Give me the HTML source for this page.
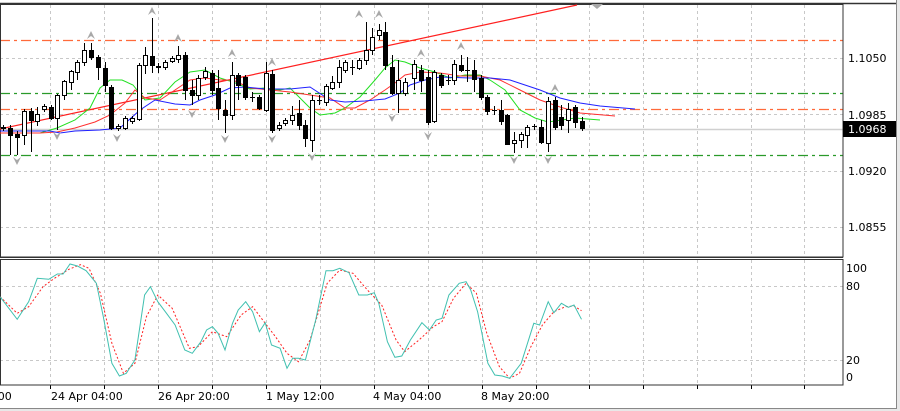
<!DOCTYPE html>
<html><head><meta charset="utf-8"><style>
html,body{margin:0;padding:0;background:#fff;width:900px;height:411px;overflow:hidden}
svg{display:block}
text{font-family:"DejaVu Sans","Liberation Sans",sans-serif;font-size:11px;fill:#000}
</style></head><body>
<svg id="s" width="900" height="411" xmlns="http://www.w3.org/2000/svg">
<rect x="0" y="0" width="900" height="411" fill="#fff"/>
<rect x="897" y="0" width="3" height="411" fill="#e8e8e8"/>
<rect x="0" y="409" width="900" height="2" fill="#e8e8e8"/>
<line x1="0" y1="3.5" x2="897" y2="3.5" stroke="#333" stroke-width="1.5"/>
<line x1="896.5" y1="0" x2="896.5" y2="409" stroke="#888"/>
<line x1="0" y1="408.5" x2="897" y2="408.5" stroke="#888"/>
<g id="g"></g>
<text x="848" y="62">1.1050</text>
<text x="848" y="119">1.0985</text>
<text x="848" y="175">1.0920</text>
<text x="848" y="231">1.0855</text>
<rect x="843" y="121" width="53" height="16" fill="#000"/>
<text x="848" y="133" style="fill:#fff">1.0968</text>
<text x="846" y="272">100</text>
<text x="846" y="290">80</text>
<text x="846" y="364">20</text>
<text x="846" y="381">0</text>
<text x="-6" y="400">:00</text>
<text x="51" y="400">24 Apr 04:00</text>
<text x="158" y="400">26 Apr 20:00</text>
<text x="266" y="400">1 May 12:00</text>
<text x="373" y="400">4 May 04:00</text>
<text x="481" y="400">8 May 20:00</text>
</svg>
<script>
var g=document.getElementById('g'),h='';
function L(x1,y1,x2,y2,st){h+='<line x1="'+x1+'" y1="'+y1+'" x2="'+x2+'" y2="'+y2+'" '+st+'/>';}
var vx=[50,104,158,212,266,320,374,428,482,536,589,643,697,751,804];
vx.forEach(function(x){L(x+.5,5,x+.5,256,'stroke="#c8c8c8" stroke-dasharray="3,3"');L(x+.5,260,x+.5,384,'stroke="#c8c8c8" stroke-dasharray="3,3"');L(x+.5,385,x+.5,389,'stroke="#000"');});
[58,114,171,227].forEach(function(y){L(0,y+.5,843,y+.5,'stroke="#c8c8c8" stroke-dasharray="3,3"');});
[286,360].forEach(function(y){L(0,y+.5,843,y+.5,'stroke="#c8c8c8" stroke-dasharray="3,3"');});
L(0,129.5,843,129.5,'stroke="#d0d0d0" stroke-width="1.5"');
L(0,40.5,843,40.5,'stroke="#ff6a3a" stroke-width="1.2" stroke-dasharray="10,4,3,4"');
L(0,109.5,843,109.5,'stroke="#ff6a3a" stroke-width="1.2" stroke-dasharray="10,4,3,4"');
L(0,93.5,843,93.5,'stroke="#2a9a2a" stroke-width="1.2" stroke-dasharray="10,4,3,4"');
L(0,155.5,843,155.5,'stroke="#2a9a2a" stroke-width="1.2" stroke-dasharray="10,4,3,4"');
h+='<rect x="0.5" y="4.5" width="842.5" height="252.5" fill="none" stroke="#333"/>';
h+='<rect x="0.5" y="259.5" width="842.5" height="125.5" fill="none" stroke="#333"/>';
L(0,257.5,843,257.5,'stroke="#333"');
L(0,129,577,5,'stroke="#ff2020" stroke-width="1.2"');
function P(pts,col,extra){h+='<polyline fill="none" stroke="'+col+'" '+(extra||'')+' points="'+pts.map(function(p){return p.join(',')}).join(' ')+'"/>';}
P([[0,133],[40,133],[57,128],[75,120],[90,108],[100,88],[110,80],[122,80],[133,85],[145,100],[160,98],[175,82],[190,72],[205,70],[220,78],[233,82],[250,89],[265,88],[280,90],[290,88],[300,98],[310,108],[320,115],[335,113],[345,108],[360,97],[375,80],[385,68],[395,60],[405,62],[420,68],[435,72],[450,78],[465,75],[480,75],[490,80],[505,90],[520,110],[535,118],[548,122],[562,120],[575,118],[600,120]],'#22e022');
P([[0,133],[40,133],[57,132],[75,128],[95,122],[110,115],[125,103],[135,90],[145,98],[160,100],[175,90],[190,80],[205,78],[220,80],[233,80],[250,88],[270,90],[290,92],[310,95],[330,98],[345,108],[355,108],[370,100],[385,90],[395,83],[405,75],[420,72],[440,73],[460,76],[480,76],[500,80],[520,90],[540,100],[560,107],[580,113],[615,116]],'#ff3030');
P([[0,131],[50,131],[60,133],[75,131],[100,130],[120,128],[140,110],[155,100],[175,104],[190,105],[200,100],[215,95],[230,88],[245,87],[265,89],[290,89],[310,87],[330,100],[345,102],[365,101],[385,99],[400,93],[410,85],[425,80],[440,77],[470,78],[490,78],[510,80],[540,90],[560,98],[580,103],[600,106],[635,109]],'#2020ff');
var C=[[3,127,128,125,131],[10,128,135,125,155],[17,134,137,131,155],[24,135,111,109,145],[31,111,120,108,152],[37,121,114,107,126],[44,109,106,104,112],[51,107,118,105,120],[57,118,95,94,130],[64,95,81,80,100],[71,82,71,70,90],[77,72,62,60,80],[84,62,50,43,66],[91,50,57,43,60],[98,57,67,55,80],[105,68,85,62,92],[111,87,128,85,130],[118,128,126,124,131],[125,128,118,116,130],[132,121,118,116,124],[139,119,65,63,121],[145,65,55,47,74],[152,56,65,18,73],[158,66,67,63,73],[165,67,62,60,70],[172,61,58,56,63],[178,59,55,46,63],[185,55,90,52,100],[192,90,95,80,105],[198,95,78,75,100],[205,77,71,67,80],[212,73,90,70,95],[218,88,108,70,120],[225,110,115,100,133],[232,115,75,62,120],[238,75,85,73,100],[245,77,97,75,100],[252,97,97,92,102],[259,97,108,95,110],[266,110,73,62,112],[272,74,130,70,133],[279,128,125,122,131],[285,123,120,118,126],[292,120,115,106,125],[299,113,125,100,130],[305,125,138,120,147],[312,140,100,95,152],[319,100,100,95,105],[326,102,86,84,106],[332,88,82,76,90],[339,82,67,60,88],[345,70,62,60,73],[352,67,67,60,75],[359,68,60,58,70],[366,60,50,22,65],[372,50,37,28,55],[379,35,30,24,40],[385,32,65,22,70],[392,67,93,55,95],[398,93,80,60,113],[405,93,82,78,96],[414,78,64,60,90],[421,70,80,65,92],[428,77,122,70,125],[434,121,72,70,123],[441,75,85,73,88],[448,80,80,75,85],[454,80,64,60,85],[461,65,70,55,72],[467,70,70,57,82],[474,70,79,60,92],[481,78,97,75,100],[487,97,111,95,115],[494,110,110,106,115],[501,110,121,100,125],[507,115,144,114,145],[514,143,140,132,153],[521,140,134,132,148],[527,135,127,125,148],[534,126,126,124,130],[541,127,142,120,144],[548,143,101,97,152],[555,100,127,97,130],[561,117,125,105,130],[568,120,109,103,133],[575,107,122,105,128],[582,121,128,117,131]];
C.forEach(function(c){var x=c[0],o=c[1],cl=c[2],t=Math.min(o,cl),b=Math.max(o,cl);
L(x+.5,c[3],x+.5,c[4],'stroke="#000"');
if(b-t<1){L(x-2,t+.5,x+3,t+.5,'stroke="#000"');}
else h+='<rect x="'+(x-1.5)+'" y="'+(t+.5)+'" width="4" height="'+(b-t)+'" fill="'+(cl>o?'#000':'#fff')+'" stroke="#000"/>';});
function up(x,y){h+='<path d="M'+(x-4)+','+(y+4)+' L'+x+','+(y-4)+' L'+(x+4)+','+(y+4)+' L'+x+','+(y+1)+'Z" fill="#a8a8a8"/>';}
function dn(x,y){h+='<path d="M'+(x-4)+','+(y-4)+' L'+x+','+(y+4)+' L'+(x+4)+','+(y-4)+' L'+x+','+(y-1)+'Z" fill="#a8a8a8"/>';}
[[91,35],[152,11],[178,38],[232,53],[272,62],[359,14],[379,14],[421,53],[461,46],[555,88]].forEach(function(p){up(p[0],p[1]);});
[[17,161],[57,136],[117,138],[192,114],[225,139],[272,139],[312,157],[392,118],[428,136],[514,160],[548,160]].forEach(function(p){dn(p[0],p[1]);});
h+='<path d="M591,4 L597,9 L603,4Z" fill="#a8a8a8"/>';
function S(a){return a.map(function(p){return [(p[0]*0.574).toFixed(1),(250+p[1]/3).toFixed(1)];});}
var K=[[0,140],[30,208],[50,155],[65,85],[85,88],[100,72],[110,72],[122,42],[135,48],[150,62],[168,100],[180,200],[195,340],[208,378],[220,370],[235,330],[252,135],[262,110],[275,155],[290,190],[305,225],[322,300],[335,310],[350,275],[360,240],[370,230],[380,250],[392,300],[405,220],[415,180],[428,155],[440,185],[452,245],[462,218],[473,285],[488,295],[500,355],[510,325],[520,325],[532,330],[550,210],[568,62],[580,62],[592,55],[608,68],[625,135],[640,135],[652,128],[660,160],[675,275],[688,322],[700,318],[715,270],[735,218],[748,240],[760,210],[770,205],[782,135],[800,100],[812,95],[820,120],[832,185],[850,340],[862,375],[875,378],[888,385],[908,340],[930,220],[940,225],[955,155],[965,188],[978,160],[990,172],[1000,165],[1013,208]];
var D=[[0,140],[30,190],[50,170],[75,110],[95,85],[120,58],[140,44],[155,55],[175,130],[195,280],[215,370],[235,340],[255,200],[275,135],[300,175],[330,295],[345,290],[370,245],[395,260],[420,195],[440,170],[460,215],[480,260],[500,310],[520,335],[540,270],[570,100],[592,60],[615,70],[640,120],[665,165],[690,270],[705,305],[730,270],[755,230],[770,215],[790,145],[812,100],[830,130],[848,250],[870,350],[888,385],[905,370],[925,290],[945,225],[965,185],[985,170],[1000,168],[1013,182]];
P(S(D),'#ff2020','stroke-dasharray="2,2"');
P(S(K),'#40c0b0');
g.innerHTML=h;
</script>
</body></html>
